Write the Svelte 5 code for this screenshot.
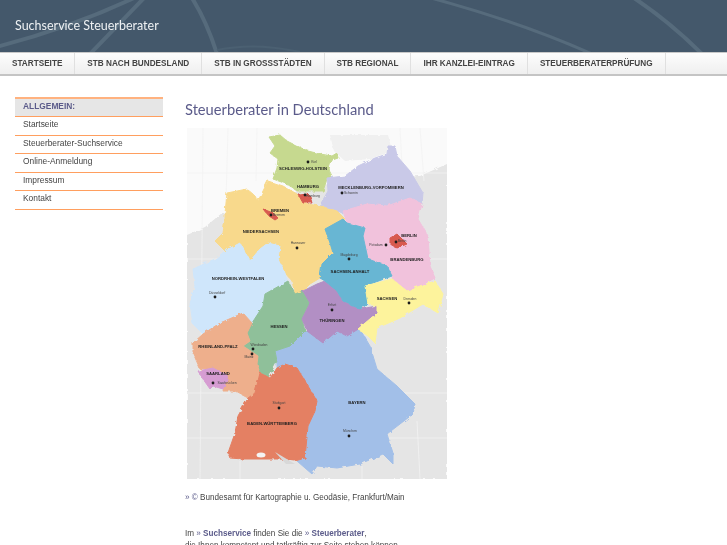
<script>
	const nav = [
		'Startseite',
		'StB nach Bundesland',
		'StB in Großstädten',
		'StB regional',
		'Ihr Kanzlei-Eintrag',
		'Steuerberaterprüfung'
	];
	const side = ['Startseite', 'Steuerberater-Suchservice', 'Online-Anmeldung', 'Impressum', 'Kontakt'];

	const states = [
		{ fill: '#c6d98f', pts: '269,136 280,134 287,140 297,145 308,150 320,153 332,155 337,152 338,157 330,160 328,167 332,175 327,178 323,190 313,190 297,190 287,183 273,178 277,167 278,158 270,152 275,145' },
		{ fill: '#c9c9e8', pts: '327,177 345,175 358,165 375,157 387,153 388,145 395,145 397,155 410,170 423,192 422,203 410,197 387,205 367,203 343,212 337,210 320,204 328,190' },
		{ fill: '#f8d98c', pts: '227,192 247,188 255,195 258,200 268,180 283,185 297,193 307,203 320,205 337,210 345,218 325,228 330,242 333,252 322,263 320,277 310,283 303,290 295,293 292,280 285,272 278,257 280,245 268,242 260,248 250,260 240,242 225,250 215,240 223,232 225,218 225,212' },
		{ fill: '#cfe6fb', pts: '240,242 250,260 260,248 268,242 280,245 278,257 285,272 288,283 265,293 263,305 252,322 243,312 220,322 203,333 193,323 190,303 195,285 193,268 215,258 225,250' },
		{ fill: '#a2bfe8', pts: '277,360 275,350 290,345 307,328 323,330 340,325 358,325 370,345 377,368 397,385 415,403 413,413 387,433 393,452 393,463 383,453 360,463 337,467 317,465 312,473 305,467 297,460 305,457 308,425 315,410 317,400 305,380 297,367 285,363 277,367' },
		{ fill: '#8fc09a', pts: '288,280 295,293 303,290 310,302 302,318 305,330 290,345 275,350 277,360 268,377 260,372 257,363 258,355 243,345 250,340 247,332 252,322 263,305 265,293' },
		{ fill: '#eeaf8c', pts: '243,312 252,322 247,332 250,340 243,345 258,355 257,363 260,372 255,392 248,397 235,390 223,390 227,375 213,367 200,368 193,352 193,342 203,333 220,322' },
		{ fill: '#d69cd2', pts: '198,370 213,367 228,375 223,388 213,385 210,388 203,378' },
		{ fill: '#e48064', pts: '285,363 297,367 305,380 317,400 315,410 308,425 305,457 295,460 280,458 260,458 243,458 230,457 228,452 235,432 238,415 248,397 255,392 260,372 270,377 277,367' },
		{ fill: '#b28fc4', pts: '303,290 317,283 325,280 337,290 343,300 360,308 377,305 377,312 360,327 347,335 337,330 323,342 307,330 302,318 310,302' },
		{ fill: '#f1c2dc', pts: '343,210 367,203 387,205 410,197 422,203 418,218 428,235 430,265 435,277 420,285 407,290 393,280 392,275 387,265 368,258 363,235 365,227 347,222' },
		{ fill: '#67b6d3', pts: '343,218 325,228 330,242 333,252 322,263 320,277 325,280 337,290 343,300 360,308 368,303 365,285 392,275 387,265 368,258 363,235 365,227 347,222' },
		{ fill: '#fdf39c', pts: '365,285 392,278 407,290 420,285 435,280 443,293 438,312 423,303 400,317 377,327 375,342 368,335 358,328 377,312 377,305 368,303' },
		{ fill: '#d85a50', pts: '298,193 307,192 310,195 312,202 303,202' },
		{ fill: '#d85a50', pts: '263,208 273,212 278,217 275,219 269,215' },
		{ fill: '#d85a50', pts: '390,237 397,233 402,238 407,243 397,247 390,243' }
	];

	const names = [
		['SCHLESWIG-HOLSTEIN', 303, 169],
		['HAMBURG', 308, 187],
		['MECKLENBURG-VORPOMMERN', 371, 188],
		['BREMEN', 280, 211],
		['NIEDERSACHSEN', 261, 232],
		['BERLIN', 409, 236],
		['BRANDENBURG', 407, 260],
		['SACHSEN-ANHALT', 350, 272],
		['NORDRHEIN-WESTFALEN', 238, 279],
		['SACHSEN', 387, 299],
		['HESSEN', 279, 327],
		['THÜRINGEN', 332, 321],
		['RHEINLAND-PFALZ', 218, 347],
		['SAARLAND', 218, 374],
		['BADEN-WÜRTTEMBERG', 272, 424],
		['BAYERN', 357, 403]
	];

	const cities = [
		['Kiel', 308, 161, 314, 162],
		['Hamburg', 305, 194, 313, 196],
		['Schwerin', 342, 192, 351, 193],
		['Bremen', 271, 214, 279, 215],
		['Hannover', 297, 247, 298, 243],
		['Berlin', 396, 241, 402, 241],
		['Potsdam', 386, 244, 376, 245],
		['Magdeburg', 349, 258, 349, 255],
		['Düsseldorf', 215, 296, 217, 293],
		['Dresden', 409, 302, 410, 299],
		['Erfurt', 332, 309, 332, 305],
		['Wiesbaden', 253, 348, 259, 345],
		['Mainz', 252, 353, 249, 357],
		['Saarbrücken', 213, 382, 227, 383],
		['Stuttgart', 279, 407, 279, 403],
		['München', 349, 435, 350, 431]
	];
</script>

<div class="page">
	<header class="top">
		<svg class="arcs" width="727" height="52" viewBox="0 0 727 52" aria-hidden="true">
			<g fill="none" stroke="#566b7c" stroke-width="4">
				<path d="M-4 47 Q70 28 134 -2" />
				<path d="M90 54 Q115 28 144 -2" />
				<path d="M192 -2 Q207 22 217 54" />
				<path d="M431 -2 Q520 22 592 54" stroke-width="3" />
				<path d="M634 -2 Q670 22 702 54" />
			</g>
			<path d="M217 50 Q255 42 300 52" fill="none" stroke="#4b6072" stroke-width="2" />
		</svg>
		<div class="brand">Suchservice Steuerberater</div>
	</header>

	<nav class="menu">
		{#each nav as item}
			<span class="menu-item">{item}</span>
		{/each}
	</nav>

	<div class="body">
		<aside class="side">
			<div class="side-head">Allgemein:</div>
			{#each side as item}
				<div class="side-item">{item}</div>
			{/each}
		</aside>

		<main class="content">
			<h1>Steuerberater in Deutschland</h1>

			<svg class="map" width="260" height="351" viewBox="187 127 260 351">
				<defs>
					<filter id="rough" x="-5%" y="-5%" width="110%" height="110%">
						<feTurbulence type="fractalNoise" baseFrequency="0.22" numOctaves="2" seed="4" />
						<feDisplacementMap in="SourceGraphic" scale="3.5" />
					</filter>
				</defs>
				<rect x="187" y="127" width="260" height="351" fill="#fafafa" />
				<g filter="url(#rough)">
					<polygon points="187,234 205,226 222,212 280,195 340,180 420,175 447,163 447,478 187,478" fill="#e5e5e5" />
					<polygon points="330,134 388,134 392,150 370,158 345,160 334,150" fill="#f0f0f0" />
				</g>
				<g fill="none" stroke="#f3f3f3" stroke-width="0.8">
					<path d="M187 172 H447 M187 258 H230 M430 258 H447 M187 392 H230 M400 392 H447 M187 437 H235 M385 437 H447" />
					<path d="M203 127 L200 478 M228 127 L226 200 M257 127 L256 180 M400 127 L402 165 M420 127 L424 180 M417 420 L420 478 M240 460 L240 478 M362 465 L362 478" />
				</g>
				<g filter="url(#rough)">
					{#each states as s}
						<polygon points={s.pts} fill={s.fill} stroke={s.fill} stroke-width="1" />
					{/each}
				</g>
				<ellipse cx="261" cy="454" rx="4.5" ry="2.5" fill="#f4f4f4" />
				<polygon points="275,451 290,460 295,463 286,463" fill="#d8d8d8" />

				{#each cities as c}
					<circle cx={c[1]} cy={c[2]} r="1.4" fill="#1c1c1c" />
					<text x={c[3]} y={c[4]} class="city">{c[0]}</text>
				{/each}
				{#each names as n}
					<text x={n[1]} y={n[2]} class="state">{n[0]}</text>
				{/each}
			</svg>

			<p class="credit"><span class="raquo">»</span> <span class="copy">©</span> Bundesamt für Kartographie u. Geodäsie, Frankfurt/Main</p>

			<p class="intro">
				Im <span class="raquo">»</span> <a href="#s">Suchservice</a> finden Sie die <span class="raquo">»</span> <a href="#b">Steuerberater</a>,<br />
				die Ihnen kompetent und tatkräftig zur Seite stehen können
			</p>
		</main>
	</div>
</div>

<style>
	:global(body) {
		margin: 0;
		background: #fff;
		overflow: hidden;
	}

	.page {
		width: 727px;
		height: 545px;
		overflow: hidden;
		font-family: 'Liberation Sans', Arial, sans-serif;
		color: #444;
		filter: blur(0.35px);
	}

	.top {
		position: relative;
		height: 52px;
		background: #44586b;
		display: flex;
		align-items: center;
	}

	.arcs {
		position: absolute;
		inset: 0;
	}

	.brand {
		position: relative;
		margin: 0 0 0 15px;
		padding-bottom: 1px;
		font-family: Lato, 'Open Sans', sans-serif;
		font-size: 12.5px;
		color: #eef1f3;
	}

	.menu {
		display: flex;
		height: 21px;
		border-top: 1px solid #c9c9c9;
		border-bottom: 2px solid #c4c4c4;
		background: linear-gradient(to bottom, #fdfdfd, #efefef);
	}

	.menu-item {
		display: flex;
		align-items: center;
		padding: 0 12px;
		border-right: 1px solid #e0e0e0;
		font-size: 8.2px;
		font-weight: bold;
		text-transform: uppercase;
		color: #444;
		white-space: nowrap;
	}

	.body {
		display: grid;
		grid-template-columns: 148px 1fr;
		column-gap: 22px;
		padding: 21px 0 0 15px;
	}

	.side {
		border-top: 2px solid #ffb27f;
		font-size: 8.4px;
	}

	.side-head {
		height: 17px;
		line-height: 15px;
		padding-left: 8px;
		background: #e6e6e6;
		border-bottom: 1.5px solid #ff9f5f;
		font-weight: bold;
		text-transform: uppercase;
		color: #5b5b8a;
	}

	.side-item {
		height: 17.6px;
		line-height: 15px;
		padding-left: 8px;
		border-bottom: 1px solid #ff9f5f;
		color: #444;
	}

	.content {
		min-width: 0;
	}

	h1 {
		margin: 2px 0 9px;
		font-family: Lato, 'Open Sans', sans-serif;
		font-size: 14.7px;
		font-weight: 400;
		line-height: 20px;
		color: #5b5b8a;
	}

	.map {
		display: block;
		margin-left: 2px;
	}

	.state {
		font-size: 4.2px;
		font-weight: bold;
		fill: #1d1d1d;
		text-anchor: middle;
	}

	.city {
		font-size: 3.4px;
		fill: #444;
		text-anchor: middle;
	}

	p {
		margin: 0;
		font-size: 8.15px;
		line-height: 12px;
	}

	.credit {
		margin-top: 13px;
	}

	.intro {
		margin-top: 24px;
	}

	.raquo,
	.copy {
		color: #5b5b8a;
	}

	a {
		color: #5b5b8a;
		font-weight: bold;
		text-decoration: none;
	}
</style>
